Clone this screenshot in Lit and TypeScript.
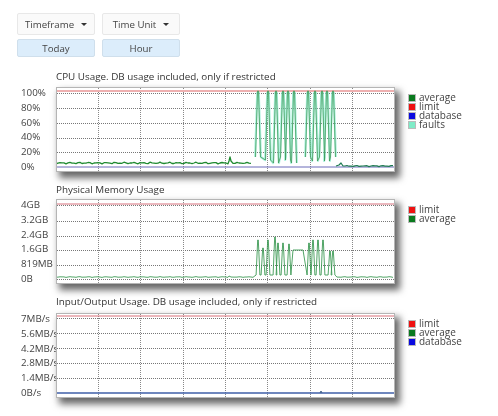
import { LitElement, html, css, svg } from "lit";
import { customElement, property } from "lit/decorators.js";

const W = 339;
const H = 85;
const GRID_X = [42, 84, 127, 169, 211, 254, 296];

type Pt = [number, number];
const line = (p: Pt[]) => p.map(([x, y]) => `${x.toFixed(1)},${y.toFixed(1)}`).join(" ");

function noisy(x0: number, x1: number, y: number, amp: number, seed = 1): Pt[] {
  const out: Pt[] = [];
  for (let x = x0; x <= x1; x += 2) {
    out.push([x, y + Math.sin(x * 0.7 + seed) * amp * 0.6 + Math.sin(x * 1.9 + seed * 2) * amp * 0.4]);
  }
  return out;
}

function spikes(peaks: [number, number, number][], half = 2.2): Pt[] {
  const out: Pt[] = [];
  for (const [x, top, low] of peaks) {
    out.push([x - half - 1.2, low], [x - half * 0.4, top], [x + half * 0.4, top], [x + half + 1.2, low]);
  }
  return out;
}

const cpuA: [number, number, number][] = [202, 212, 220, 227, 232, 238].map((x, i) => [x, 4, 70 + (i % 3) * 3]);
const cpuB: [number, number, number][] = [252, 259, 266, 271, 277].map((x, i) => [x, 4, 70 + (i % 2) * 4]);

const memA: [number, number, number][] = [
  [202, 41, 76], [207, 49, 76], [212, 41, 76], [219, 38, 76], [222, 44, 76], [227, 44, 76], [233, 45, 76],
];
const memB: [number, number, number][] = [
  [253, 44, 76], [257, 41, 76], [262, 41, 76], [267, 41, 76], [274, 52, 76], [277, 52, 76],
];

type Series = { pts: Pt[]; color: string; width: number; opacity?: number };

const PLOTS: Record<string, { ys: number[]; series: Series[] }> = {
  cpu: {
    ys: [6, 21, 36, 51, 65],
    series: [
      { pts: spikes(cpuA, 1.7), color: "#8cecd0", width: 2.2, opacity: 0.7 },
      { pts: spikes(cpuB, 1.7), color: "#8cecd0", width: 2.2, opacity: 0.7 },
      { pts: [[0, 80], [W, 80]], color: "#6a6ab8", width: 1 },
      { pts: [[1, 4], [W - 1, 4]], color: "#eeb0b0", width: 2 },
      { pts: [...noisy(0, 172, 76, 0.9), [173, 74], [174, 70], [175, 74], ...noisy(177, 196, 76, 0.7, 3)], color: "#1f8a30", width: 1.3 },
      { pts: spikes(cpuA, 1.3), color: "#3f9a58", width: 0.9, opacity: 0.9 },
      { pts: spikes(cpuB, 1.3), color: "#3f9a58", width: 0.9, opacity: 0.9 },
      { pts: [[280, 79], [283, 78], [285, 76], [287, 79], ...noisy(289, 338, 79, 0.6, 2)], color: "#1d7a50", width: 1.2 },
    ],
  },
  mem: {
    ys: [6, 22, 37, 51, 66, 80],
    series: [
      { pts: [[1, 5], [W - 1, 5]], color: "#e5a0a8", width: 1.6 },
      {
        pts: [
          ...noisy(0, 172, 78, 0.4), [173, 77], [175, 78], ...noisy(177, 198, 78, 0.3, 2),
          ...spikes(memA, 0.7), [237, 51], [247, 51], ...spikes(memB, 0.7),
          ...noisy(281, 338, 78, 0.4, 4),
        ],
        color: "#3d9a55",
        width: 0.9,
      },
    ],
  },
  io: {
    ys: [5, 20, 35, 50, 65],
    series: [
      { pts: [[1, 3], [W - 1, 3]], color: "#d9707a", width: 1.2 },
      { pts: [[0, 80], [W, 80]], color: "#3f5fa8", width: 1.4 },
      { pts: [[264, 80], [265, 78], [266, 80]], color: "#3f5f88", width: 1 },
    ],
  },
};

@customElement("usage-chart")
class UsageChart extends LitElement {
  static styles = css`
    :host {
      display: block;
    }
    .title {
      height: 14px;
      line-height: 14px;
      padding-left: 56px;
      font-size: 9.85px;
      color: #333;
      white-space: nowrap;
    }
    .row {
      display: flex;
      align-items: flex-start;
      height: 85px;
    }
    .axis {
      width: 35px;
      margin-left: 21px;
      margin-top: -1px;
      flex: none;
      display: grid;
      grid-auto-rows: 14.8px;
      font-size: 9.8px;
      line-height: 14.8px;
      color: #444;
      white-space: nowrap;
    }
    .plot {
      position: relative;
      flex: none;
      width: 339px;
      height: 85px;
      background: #fff;
      box-shadow: 4px 5px 7px 1px rgba(0, 0, 0, 0.6);
    }
    .plot svg {
      display: block;
    }
    .legend {
      margin-left: 13px;
      display: grid;
      grid-auto-rows: 9.1px;
      font-size: 10px;
      line-height: 9.1px;
      color: #444;
    }
    .item {
      display: flex;
      align-items: center;
      gap: 3px;
    }
    .swatch {
      width: 6px;
      height: 6px;
      border: 1px solid #bbb;
      flex: none;
    }
  `;

  @property() heading = "";
  @property() kind = "cpu";
  @property({ type: Array }) labels: string[] = [];
  @property({ type: Array }) legend: [string, string][] = [];
  @property({ type: Number }) titleGap = 4;

  render() {
    const p = PLOTS[this.kind];
    return html`
      <div class="title" style="margin-bottom:${this.titleGap}px">${this.heading}</div>
      <div class="row">
        <div class="axis">${this.labels.map((l) => html`<div>${l}</div>`)}</div>
        <div class="plot">
          <svg width=${W} height=${H} viewBox="0 0 ${W} ${H}">
            ${p.ys.map(
              (y) => svg`<line x1="1" x2=${W - 1} y1=${y + 0.5} y2=${y + 0.5} stroke="#777" stroke-dasharray="1 1"/>`
            )}
            ${GRID_X.map(
              (x) => svg`<line x1=${x + 0.5} x2=${x + 0.5} y1="1" y2=${H} stroke="#888" stroke-dasharray="1 1"/>`
            )}
            ${p.series.map(
              (s) =>
                svg`<polyline points=${line(s.pts)} fill="none" stroke=${s.color} stroke-width=${s.width} stroke-opacity=${s.opacity ?? 1} stroke-linejoin="round"/>`
            )}
            <rect x="0.5" y="0.5" width=${W - 1} height=${H - 1} fill="none" stroke="#b5b5b5"/>
          </svg>
        </div>
        <div class="legend" style="padding-top:6px">
          ${this.legend.map(
            ([name, color]) => html`<div class="item">
              <span class="swatch" style="background:${color}"></span><span>${name}</span>
            </div>`
          )}
        </div>
      </div>
    `;
  }
}

@customElement("app-root")
export class AppRoot extends LitElement {
  static styles = css`
    :host {
      display: block;
      width: 498px;
      height: 416px;
      overflow: hidden;
      background: #fff;
      font-family: "Open Sans", sans-serif;
      filter: blur(0.35px);
    }
    .controls {
      display: grid;
      grid-template-columns: 78px 78px;
      grid-template-rows: 22px 18px;
      gap: 4px 7px;
      padding: 13px 0 0 17px;
      font-size: 9.7px;
      color: #444;
    }
    .btn {
      display: flex;
      align-items: center;
      justify-content: center;
      gap: 7px;
      background: #fafafa;
      border: 1px solid #e8e8e8;
      border-radius: 2px;
      box-sizing: border-box;
    }
    .caret {
      width: 0;
      height: 0;
      border-left: 3px solid transparent;
      border-right: 3px solid transparent;
      border-top: 3px solid #333;
    }
    .value {
      background: #dcedfb;
      border-color: #cfdfec;
    }
    .charts {
      display: flex;
      flex-direction: column;
      gap: 10px;
      margin-top: 12px;
    }
  `;

  render() {
    return html`
      <div class="controls">
        <div class="btn">Timeframe <span class="caret"></span></div>
        <div class="btn">Time Unit <span class="caret"></span></div>
        <div class="btn value">Today</div>
        <div class="btn value">Hour</div>
      </div>
      <div class="charts">
        <usage-chart
          heading="CPU Usage. DB usage included, only if restricted"
          kind="cpu"
          .labels=${["100%", "80%", "60%", "40%", "20%", "0%"]}
          .legend=${[["average", "#0a7a1e"], ["limit", "#ee1111"], ["database", "#0a0ae0"], ["faults", "#7fecc8"]]}
          .titleGap=${4}
        ></usage-chart>
        <usage-chart
          heading="Physical Memory Usage"
          kind="mem"
          .labels=${["4GB", "3.2GB", "2.4GB", "1.6GB", "819MB", "0B"]}
          .legend=${[["limit", "#ee1111"], ["average", "#0a7a1e"]]}
          .titleGap=${3}
        ></usage-chart>
        <usage-chart
          heading="Input/Output Usage. DB usage included, only if restricted"
          kind="io"
          .labels=${["7MB/s", "5.6MB/s", "4.2MB/s", "2.8MB/s", "1.4MB/s", "0B/s"]}
          .legend=${[["limit", "#ee1111"], ["average", "#0a7a1e"], ["database", "#0a0ae0"]]}
          .titleGap=${5}
        ></usage-chart>
      </div>
    `;
  }
}
